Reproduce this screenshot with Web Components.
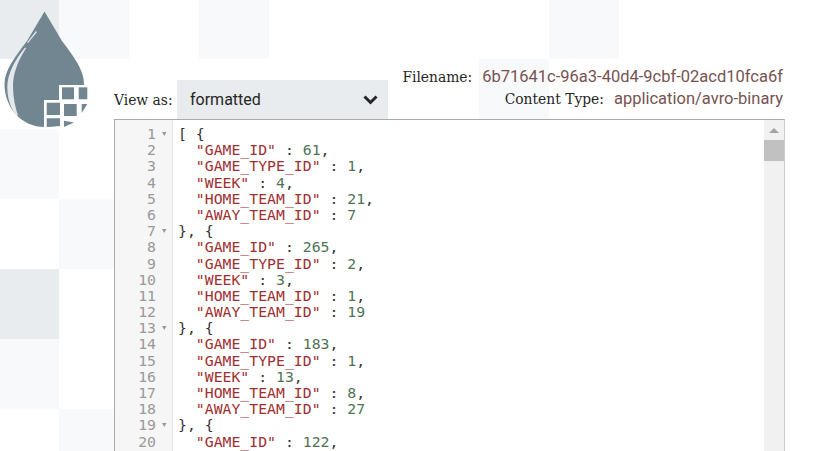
<!DOCTYPE html>
<html>
<head>
<meta charset="utf-8">
<title>Content viewer</title>
<style>
  html, body { margin: 0; height: 100%; overflow: hidden; background: #fff; }
</style>
</head>
<body>
<viewer-page>
  <drop-logo slot="logo"></drop-logo>
  <view-select slot="select" label="View as:" value="formatted"></view-select>
  <file-meta slot="meta" label="Filename:" value="6b71641c-96a3-40d4-9cbf-02acd10fca6f"></file-meta>
  <file-meta slot="meta" label="Content Type:" value="application/avro-binary"></file-meta>
  <code-editor slot="editor"></code-editor>
</viewer-page>
<script>
"use strict";

(() => {
  const dark = "#e9ecef";
  const light = "#f8f9fa";

  // x, y, colour of each tinted square behind the page
  const squares = [
    [-11, -11, dark], [59, -11, light], [199, -11, light], [549, -11, light],
    [479, 59, light],
    [-11, 129, light],
    [59, 199, light],
    [-11, 269, dark],
    [-11, 339, light],
    [59, 409, light]
  ];

  const checker = squares.map(([x, y, c]) =>
    `linear-gradient(${c}, ${c}) ${x}px ${y}px / 70px 70px no-repeat`).join(", ");

  customElements.define("viewer-page", class extends HTMLElement {
    constructor() {
      super();
      this.attachShadow({mode: "open"}).innerHTML = `
        <style>
          :host {
            display: grid;
            grid-template-columns: 114px 671px;
            grid-template-rows: 119px auto;
            height: 451px;
            overflow: hidden;
            background: ${checker};
          }
          #logo { grid-row: 1 / 3; }
          #head {
            display: flex;
            justify-content: space-between;
            align-items: flex-end;
          }
          #meta { display: flex; flex-direction: column; padding-right: 2px; padding-bottom: 9px; }
        </style>
        <div id="logo"><slot name="logo"></slot></div>
        <div id="head">
          <slot name="select"></slot>
          <div id="meta"><slot name="meta"></slot></div>
        </div>
        <slot name="editor"></slot>
      `;
    }
  });

  customElements.define("drop-logo", class extends HTMLElement {
    constructor() {
      super();
      this.attachShadow({mode: "open"}).innerHTML = `
        <style>
          :host { display: block; padding: 11px 0 0 4px; }
          svg { display: block; }
        </style>
        <svg width="86" height="118" viewBox="4 11 86 118">
          <path fill="#728692" d="M44.500 11.500L62 41C74 57 84 70 84 84C84 110 66 127 44.500 127C22 127 4.500 108 4.500 84C4.500 70 15 57 27 41Z"/>
          <path fill="#e4e8ea" d="M36 31L37 32L28 43L27 42.500Z"/>
          <path fill="#e4e8ea" d="M25 47.500L26.200 48C17 62 13 75 13 86C13 97 15 107 18 115.500L16 115C10 107 7.300 97 7.300 87C7.300 74 15 60 25 47.500Z"/>
          <path fill="#fff" d="M59 85H90V129H44V100H59Z"/>
          <g fill="#728692">
            <rect x="62" y="87.300" width="12" height="12"/>
            <rect x="78.700" y="87.300" width="8.600" height="12"/>
            <rect x="46.700" y="102.700" width="13.300" height="12.300"/>
            <rect x="64" y="104" width="12.700" height="12"/>
            <path d="M81.700 104H87.300L81.700 113Z"/>
            <path d="M46.700 118.300H60V126L52 126.700L46.700 127Z"/>
            <path d="M64 120.700L74 122.500L64 127Z"/>
          </g>
        </svg>
      `;
    }
  });

  customElements.define("view-select", class extends HTMLElement {
    constructor() {
      super();
      this.attachShadow({mode: "open"}).innerHTML = `
        <style>
          :host { display: flex; align-items: center; height: 39px; }
          #label {
            width: 63px;
            font: 15.400px "DejaVu Serif Condensed", "DejaVu Serif", serif;
            color: #262626;
            white-space: nowrap;
          }
          #box {
            display: flex;
            align-items: center;
            justify-content: space-between;
            box-sizing: border-box;
            width: 211px;
            height: 39px;
            padding: 0 10px 0 13px;
            background: #e9ecef;
            font: 16px Roboto, sans-serif;
            color: #262626;
          }
          svg { display: block; }
        </style>
        <span id="label"></span>
        <div id="box">
          <span id="value"></span>
          <svg width="15" height="11" viewBox="0 0 15 11">
            <path d="M1.500 2.500L7.500 8.500L13.500 2.500" fill="none" stroke="#262626" stroke-width="3"/>
          </svg>
        </div>
      `;
      this.shadowRoot.getElementById("label").textContent = this.getAttribute("label");
      this.shadowRoot.getElementById("value").textContent = this.getAttribute("value");
    }
  });

  customElements.define("file-meta", class extends HTMLElement {
    constructor() {
      super();
      this.attachShadow({mode: "open"}).innerHTML = `
        <style>
          :host {
            display: flex;
            justify-content: flex-end;
            align-items: baseline;
            gap: 10px;
            height: 22px;
            line-height: 22px;
            white-space: nowrap;
          }
          #label { font: 15.400px/22px "DejaVu Serif Condensed", "DejaVu Serif", serif; color: #262626; }
          #value { font: 16.500px/22px Roboto, sans-serif; color: #775351; }
        </style>
        <span id="label"></span>
        <span id="value"></span>
      `;
      this.shadowRoot.getElementById("label").textContent = this.getAttribute("label");
      this.shadowRoot.getElementById("value").textContent = this.getAttribute("value");
    }
  });

  customElements.define("code-editor", class extends HTMLElement {
    static get records() {
      return [
        [61, 1, 4, 21, 7],
        [265, 2, 3, 1, 19],
        [183, 1, 13, 8, 27],
        [122]
      ];
    }

    constructor() {
      super();
      this.attachShadow({mode: "open"}).innerHTML = `
        <style>
          :host {
            display: flex;
            box-sizing: border-box;
            height: 340px;
            border: 1px solid #aaa;
            border-right-color: #ccc;
            background: #fff;
            overflow: hidden;
          }
          #gutter {
            flex: none;
            width: 58px;
            box-sizing: border-box;
            padding-top: 6px;
            background: #f6f6f6;
            border-right: 1px solid #e3e3e3;
            color: #999;
          }
          #code { flex: 1; padding: 6px 0 0 5px; color: #333; white-space: pre; }
          #gutter, #code { font: 14.800px/16.200px "DejaVu Sans Mono", monospace; }
          .num { display: flex; justify-content: flex-end; align-items: center; height: 16.200px; padding-right: 2px; }
          .fold { width: 14px; height: 8px; fill: #999; }
          .row { height: 16.200px; }
          .k { color: #a03030; }
          .n { color: #4f7355; }
          #scroll {
            flex: none;
            display: flex;
            flex-direction: column;
            align-items: center;
            width: 20px;
            background: #f1f1f1;
          }
          #up { margin: 7px 0 6px; display: block; }
          #thumb { width: 100%; height: 21px; background: #c1c1c1; }
        </style>
        <div id="gutter"></div>
        <div id="code"></div>
        <div id="scroll">
          <svg id="up" width="10" height="7" viewBox="0 0 10 7"><path d="M5 1L10 6H0Z" fill="#a3a3a3"/></svg>
          <div id="thumb"></div>
        </div>
      `;
      this.render();
    }

    render() {
      const names = ["GAME_ID", "GAME_TYPE_ID", "WEEK", "HOME_TEAM_ID", "AWAY_TEAM_ID"];
      const rows = [];
      this.constructor.records.forEach((rec, i) => {
        rows.push({html: i === 0 ? "[ {" : "}, {", fold: true});
        rec.forEach((val, j) => {
          const comma = i === 3 || j < rec.length - 1 ? "," : "";
          rows.push({html: `  <span class="k">"${names[j]}"</span> : <span class="n">${val}</span>${comma}`});
        });
      });

      const arrow = `<svg class="fold" viewBox="0 0 14 8"><path d="M6 2H10.500L8.250 6Z"/></svg>`;
      this.shadowRoot.getElementById("gutter").innerHTML = rows.map((row, i) =>
        `<div class="num">${i + 1}${row.fold ? arrow : `<span class="fold"></span>`}</div>`).join("");
      this.shadowRoot.getElementById("code").innerHTML = rows.map(row =>
        `<div class="row">${row.html}</div>`).join("");
    }
  });
})();
</script>
</body>
</html>
